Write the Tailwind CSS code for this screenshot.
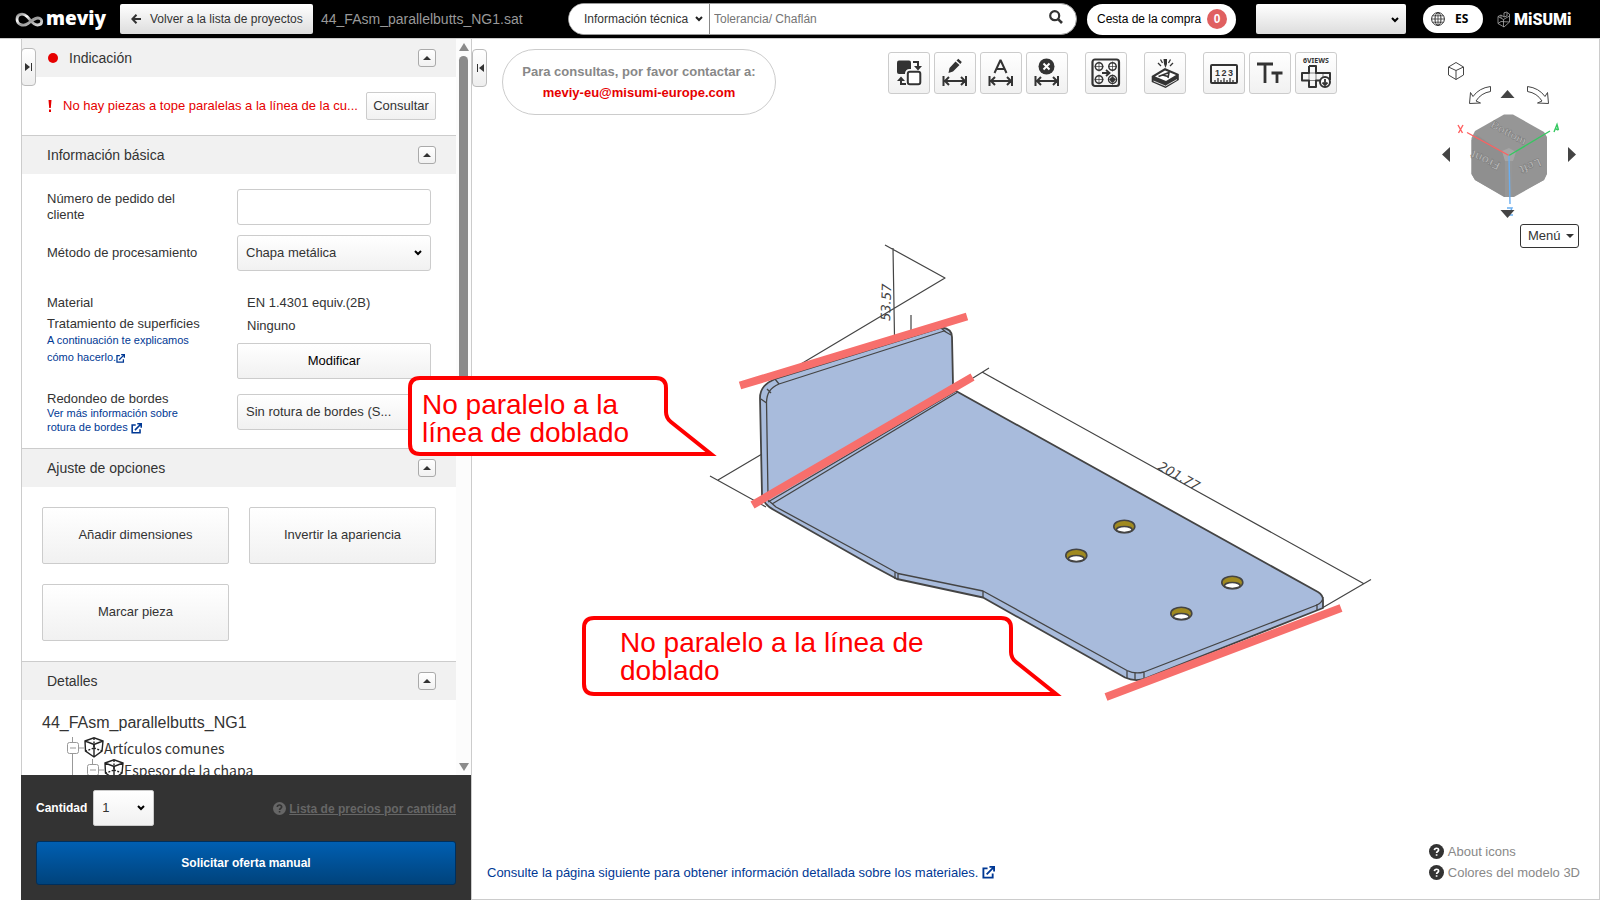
<!DOCTYPE html>
<html lang="es">
<head>
  <meta charset="UTF-8"/>
  <title>meviy</title>
  <meta name="viewport" content="width=device-width,initial-scale=1"/>
  <script src="https://cdn.jsdelivr.net/npm/@tailwindcss/browser@4"></script>
</head>
<body class="h-screen overflow-hidden flex flex-col bg-white text-[#333] text-[13px] leading-4 font-['Liberation_Sans',Arial,sans-serif]">

  <header class="h-[39px] shrink-0 flex items-center bg-black border-b border-[#ccc] pl-[15px] pr-7">
    <div class="w-[553px] shrink-0 flex items-center">
      <a href="#" class="flex items-center gap-[2px] w-[105px]" aria-label="meviy">
        <svg class="w-[29px] h-[17px]" viewBox="0 0 29 17" fill="none">
          <defs>
            <linearGradient id="ring" x1="0" y1="0" x2="1" y2="1">
              <stop offset="0" stop-color="#888"/><stop offset=".3" stop-color="#fff"/><stop offset=".55" stop-color="#999"/><stop offset="1" stop-color="#ddd"/>
            </linearGradient>
          </defs>
          <path d="M13 12.500C8 16 2 13.500 2 8C2 3 8 1.500 12 5.500C16 9.500 18 14 22.500 14C28 14 28 7 23 7C19.500 7 16.500 10 13 12.500Z" stroke="url(#ring)" stroke-width="2.800"/>
        </svg>
        <span class="text-white font-extrabold text-[19px] leading-6 -mt-[2px] font-['Open_Sans',sans-serif]">meviy</span>
      </a>
      <button class="w-[193px] h-[30px] rounded-xs bg-linear-to-b from-white to-[#ddd] flex items-center pl-[11px] text-xs">
        <svg class="w-[10px] h-[10px] mr-[9px]" viewBox="0 0 10 10" fill="none" stroke="#333" stroke-width="2"><path d="M5.500 .7L1.400 5L5.500 9.300M1.500 5H10"/></svg>
        Volver a la lista de proyectos
      </button>
      <span class="ml-2 text-sm text-[#999]">44_FAsm_parallelbutts_NG1.sat</span>
    </div>
    <form class="flex-1 h-8 flex items-center bg-white rounded-full border border-[#999] overflow-hidden">
      <div class="relative h-full">
        <select aria-label="Categoría" class="appearance-none h-full w-[141px] pl-[15px] border-r border-[#888] text-xs bg-white">
          <option>Información técnica</option>
        </select>
        <svg class="absolute right-[7px] top-3 w-2 h-[6px] pointer-events-none" viewBox="0 0 8 6" fill="none" stroke="#222" stroke-width="2"><path d="M1 1L4 4L7 1"/></svg>
      </div>
      <input type="text" aria-label="Buscar" placeholder="Tolerancia/ Chaflán" class="flex-1 h-full pl-1 text-xs outline-none placeholder:text-[#757575]"/>
      <button type="button" aria-label="Buscar" class="mr-[13px] -mt-1">
        <svg class="w-[14px] h-[14px]" viewBox="0 0 14 14" fill="none" stroke="#333" stroke-width="2.200"><circle cx="5.700" cy="5.700" r="4.500"/><path d="M8.800 8.800L13 13" stroke-width="2.600"/></svg>
      </button>
    </form>
    <button class="ml-[10px] w-[149px] h-[31px] rounded-full bg-white text-black text-xs flex items-center pl-[10px] pb-px gap-[6px]">
      Cesta de la compra
      <span class="w-5 h-5 rounded-full bg-[#e06060] text-white font-bold leading-5 text-center">0</span>
    </button>
    <div class="relative ml-5 w-[150px]">
      <select aria-label="Usuario" class="block appearance-none w-full h-[30px] rounded-xs bg-linear-to-b from-white to-[#ddd] text-black px-2"><option></option></select>
      <svg class="absolute right-[7px] top-[13px] w-2 h-[6px] pointer-events-none" viewBox="0 0 8 6" fill="none" stroke="#000" stroke-width="2"><path d="M1 1L4 4L7 1"/></svg>
    </div>
    <button class="ml-[17px] w-[60px] h-7 rounded-full bg-white text-black flex items-center pl-2 gap-[10px] font-bold text-xs font-['Noto_Sans',sans-serif]">
      <svg class="w-[14px] h-[14px]" viewBox="0 0 14 14" fill="none" stroke="#333"><circle cx="7" cy="7" r="6.400"/><ellipse cx="7" cy="7" rx="3" ry="6.400"/><path d="M7 .5V13.500M.5 7H13.500M1.500 3.800H12.500M1.500 10.200H12.500" stroke-width=".8"/></svg>
      ES
    </button>
    <a href="#" class="ml-[14px] w-[75px] flex items-center" aria-label="MiSUMi">
      <svg class="w-[14px] h-[17px] mr-[3px] shrink-0" viewBox="0 0 14 17" fill="none" stroke="#aaa" stroke-width=".8"><path d="M1 5.500L4 4L7 6L10 5V1.500L12.500 3V11L7 16L1 12.500ZM1 5.500L6.500 8.500V16M6.500 8.500L12.500 5M7 6V1.800L10 1M4 4V7M1 12.500L4 10.500L12.500 11"/></svg>
      <span class="text-white font-black text-[16px] leading-5 mt-px font-['Roboto',sans-serif]">MiSUMi</span>
    </a>
  </header>

  <div class="flex-1 min-h-0 flex">
    <aside class="relative w-[451px] ml-[21px] shrink-0 flex flex-col border-r border-[#ccc]">
      <button aria-label="Expandir panel" class="absolute left-0 top-[9px] z-10 w-[15px] h-[38px] border border-[#bbb] rounded-sm bg-linear-to-b from-white to-[#eee] flex items-center justify-center">
        <svg class="w-2 h-2" viewBox="0 0 8 8" fill="#333"><path d="M0 0L5 4L0 8ZM6 0H7V8H6Z"/></svg>
      </button>
      <div class="flex-1 min-h-0 flex border-l border-[#ccc]">
        <div class="flex-1 overflow-hidden">
          <section>
            <h2 class="h-[38px] bg-[#f1f1f1] flex items-center pl-[26px] pr-5 text-sm">
              <span class="w-[10px] h-[10px] rounded-full bg-[#e60000] mr-[11px]"></span>Indicación
              <button aria-label="Contraer" class="ml-auto w-[18px] h-[18px] border border-[#aaa] rounded-[3px] bg-linear-to-b from-white to-[#f1f1f1] flex items-center justify-center"><svg class="w-2 h-1" viewBox="0 0 8 4" fill="#333"><path d="M4 0L8 4H0Z"/></svg></button>
            </h2>
            <div class="h-[58px] flex items-center pl-[26px] pr-5 text-[#e60000]">
              <svg class="w-1 h-3 mr-[11px]" viewBox="0 0 4 12" fill="#e60000"><path d="M.5 0H3.500L2.800 8H1.200ZM1 9.500H3V12H1Z"/></svg>
              <p class="whitespace-nowrap">No hay piezas a tope paralelas a la línea de la cu...</p>
              <button class="ml-auto w-[70px] h-7 border border-[#ccc] rounded-xs bg-linear-to-b from-white to-[#f1f1f1] text-[#333]">Consultar</button>
            </div>
          </section>

          <section class="border-t border-[#ccc]">
            <h2 class="h-[38px] bg-[#f1f1f1] flex items-center pl-[25px] pr-5 text-sm">Información básica
              <button aria-label="Contraer" class="ml-auto w-[18px] h-[18px] border border-[#aaa] rounded-[3px] bg-linear-to-b from-white to-[#f1f1f1] flex items-center justify-center"><svg class="w-2 h-1" viewBox="0 0 8 4" fill="#333"><path d="M4 0L8 4H0Z"/></svg></button>
            </h2>
            <div class="pl-[25px] pr-[25px] pt-[15px] pb-[14px]">
              <div class="flex items-center justify-between">
                <label for="order" class="w-[140px]">Número de pedido del cliente</label>
                <input id="order" type="text" class="w-[194px] h-9 border border-[#ccc] rounded-[3px] px-2"/>
              </div>
              <div class="flex items-center justify-between mt-[10px]">
                <label for="process">Método de procesamiento</label>
                <div class="relative w-[194px]">
                  <select id="process" class="block appearance-none w-full h-9 border border-[#ccc] rounded-[3px] px-2 pb-px bg-linear-to-b from-white to-[#f1f1f1]"><option>Chapa metálica</option></select>
                  <svg class="absolute right-[9px] top-[15px] w-2 h-[6px] pointer-events-none" viewBox="0 0 8 6" fill="none" stroke="#000" stroke-width="2"><path d="M1 1L4 4L7 1"/></svg>
                </div>
              </div>
              <div class="flex justify-between mt-6">
                <div class="w-[170px]">
                  <p>Material</p>
                  <p class="mt-[5px]">Tratamiento de superficies</p>
                  <a href="#" class="block w-[150px] text-[11px] leading-[17px] text-[#003894]">A continuación te explicamos cómo hacerlo.<svg class="inline w-[9px] h-[9px]" viewBox="0 0 14 14" fill="none" stroke="#003894" stroke-width="2"><path d="M6 2.500H1.500V12.500H11.500V8M8 1H13V6M13 1L5 9"/></svg></a>
                </div>
                <div class="w-[194px]">
                  <p class="pl-[10px]">EN 1.4301 equiv.(2B)</p>
                  <p class="pl-[10px] mt-[7px]">Ninguno</p>
                  <button class="mt-[9px] w-full h-9 border border-[#ccc] rounded-xs bg-linear-to-b from-white to-[#f1f1f1] text-black">Modificar</button>
                </div>
              </div>
              <div class="flex justify-between mt-[15px]">
                <div class="w-[170px]">
                  <label for="edges" class="block leading-[15px] -mt-[3px]">Redondeo de bordes</label>
                  <a href="#" class="block w-[150px] text-[11px] leading-[14px] text-[#003894]">Ver más información sobre rotura de bordes <svg class="inline w-[11px] h-[11px]" viewBox="0 0 14 14" fill="none" stroke="#003894" stroke-width="2"><path d="M6 2.500H1.500V12.500H11.500V8M8 1H13V6M13 1L5 9"/></svg></a>
                </div>
                <select id="edges" class="appearance-none w-[194px] h-9 border border-[#ccc] rounded-[3px] px-2 pb-px bg-linear-to-b from-white to-[#f1f1f1]"><option>Sin rotura de bordes (S...</option></select>
              </div>
            </div>
          </section>

          <section class="border-t border-[#ccc]">
            <h2 class="h-[38px] bg-[#f1f1f1] flex items-center pl-[25px] pr-5 text-sm">Ajuste de opciones
              <button aria-label="Contraer" class="ml-auto w-[18px] h-[18px] border border-[#aaa] rounded-[3px] bg-linear-to-b from-white to-[#f1f1f1] flex items-center justify-center"><svg class="w-2 h-1" viewBox="0 0 8 4" fill="#333"><path d="M4 0L8 4H0Z"/></svg></button>
            </h2>
            <div class="grid grid-cols-2 gap-5 px-5 py-5">
              <button class="h-[57px] pb-[2px] border border-[#ccc] rounded-xs bg-linear-to-b from-white to-[#f1f1f1]">Añadir dimensiones</button>
              <button class="h-[57px] pb-[2px] border border-[#ccc] rounded-xs bg-linear-to-b from-white to-[#f1f1f1]">Invertir la apariencia</button>
              <button class="h-[57px] pb-[2px] border border-[#ccc] rounded-xs bg-linear-to-b from-white to-[#f1f1f1]">Marcar pieza</button>
            </div>
          </section>

          <section class="border-t border-[#ccc]">
            <h2 class="h-[38px] bg-[#f1f1f1] flex items-center pl-[25px] pr-5 text-sm">Detalles
              <button aria-label="Contraer" class="ml-auto w-[18px] h-[18px] border border-[#aaa] rounded-[3px] bg-linear-to-b from-white to-[#f1f1f1] flex items-center justify-center"><svg class="w-2 h-1" viewBox="0 0 8 4" fill="#333"><path d="M4 0L8 4H0Z"/></svg></button>
            </h2>
            <p class="pl-5 pt-[13px] text-base leading-5">44_FAsm_parallelbutts_NG1</p>
            <ul class="pl-[45px] pt-1 text-sm font-['Noto_Sans_CJK_JP',sans-serif]">
              <li class="flex items-center h-[22px]">
                <svg class="w-[37px] h-[22px]" viewBox="0 0 37 22" fill="none" stroke="#999"><rect x=".5" y="5.500" width="11" height="11" rx="2"/><path d="M3 11H9M12 11H17M5.500 0V5M5.500 17V22"/><g stroke="#222" stroke-width="1.400"><path d="M18 4L27 .8L36 4L35 14L27 20L18.500 14ZM18 4L27 7.500L36 4M27 7.500V20"/><path d="M27 1V11L19 14M27 11L35 14" stroke-dasharray="2 1.500"/></g></svg>
                Artículos comunes
              </li>
              <li class="flex items-center h-[22px]">
                <svg class="w-[57px] h-[22px]" viewBox="0 0 57 22" fill="none" stroke="#999"><path d="M5.500 0V22"/><rect x="20.500" y="5.500" width="11" height="11" rx="2"/><path d="M23 11H29M32 11H37M25.500 0V5M25.500 17V22"/><g stroke="#222" stroke-width="1.400"><path d="M38 4L47 .8L56 4L55 14L47 20L38.500 14ZM38 4L47 7.500L56 4M47 7.500V20"/><path d="M47 1V11L39 14M47 11L55 14" stroke-dasharray="2 1.500"/></g></svg>
                Espesor de la chapa
              </li>
            </ul>
          </section>
        </div>
        <div class="w-[15px] flex flex-col items-center bg-[#fcfcfc] py-1">
          <svg class="w-[10px] h-2" viewBox="0 0 10 8" fill="#8b8b8b"><path d="M5 0L10 8H0Z"/></svg>
          <div class="w-[9px] h-[54%] mt-[5px] rounded-full bg-[#8b8b8b]"></div>
          <svg class="w-[10px] h-2 mt-auto" viewBox="0 0 10 8" fill="#8b8b8b"><path d="M0 0H10L5 8Z"/></svg>
        </div>
      </div>
      <div class="h-[125px] shrink-0 bg-[#333] px-[15px] pt-[15px]">
        <div class="flex items-center text-xs">
          <label for="qty" class="text-white font-bold mr-[6px]">Cantidad</label>
          <div class="relative w-[61px]">
            <select id="qty" class="block appearance-none w-full h-9 rounded-xs border border-[#ccc] px-2 bg-linear-to-b from-white to-[#f1f1f1] text-[#333] text-[13px]"><option>1</option></select>
            <svg class="absolute right-[9px] top-[15px] w-2 h-[6px] pointer-events-none" viewBox="0 0 8 6" fill="none" stroke="#000" stroke-width="2"><path d="M1 1L4 4L7 1"/></svg>
          </div>
          <a href="#" class="ml-auto flex items-center gap-[3px] text-[#666] font-bold">
            <svg class="w-[13px] h-[13px]" viewBox="0 0 16 16"><circle cx="8" cy="8" r="8" fill="#666"/><path d="M5.300 6.200C5.500 2.800 10.800 2.900 10.700 6.200C10.600 8 8.100 8 8.100 9.800M8.100 11V13" fill="none" stroke="#333" stroke-width="2"/></svg>
            <span class="underline mt-px">Lista de precios por cantidad</span>
          </a>
        </div>
        <button class="w-full h-[44px] mt-[15px] border border-[#002f5c] rounded-[3px] bg-linear-to-b from-[#005fb2] to-[#00437c] text-white text-xs font-bold">Solicitar oferta manual</button>
      </div>
    </aside>

    <main class="relative flex-1 min-w-0 overflow-hidden border-r border-b border-[#ccc] flex flex-col">
      <!-- bent plate with its dimensions -->
      <svg class="absolute left-0 top-0 w-[1127px] h-[860px]" viewBox="472 39 1127 860" fill="none" stroke="#444" stroke-width="1.200" stroke-linejoin="round">
        <path d="M885 245L945 278L800 364.500M893 248L894.500 336M911 315V331"/>
        <path d="M973 378L989 368M982 372L1363.500 583.500M1323 607.500L1371 579.500M710 476L766 507M718 480L762 454"/>
        <g font-size="13" font-style="italic" font-weight="200" font-family="DejaVu Sans,sans-serif" fill="#444" stroke="none">
          <text transform="translate(890 321) rotate(-88)">53.57</text>
          <text transform="translate(1157 469) rotate(29)">201.77</text>
        </g>
        <path fill="#a8bbdc" stroke-width="1.800" d="M760 398C760 388 766 383 775 379L942 327.500Q952 329 952 337L953 384L956 391L1318 592Q1323 595 1323 600V608L1145 678.500Q1135 682 1125 677.500L983 597.500L897 579L870 564.500L774 510Q763 504 762 495Z"/>
        <path stroke-width="1.300" d="M766.500 402C767 393 770 388 779 384L944 331L951 335M766.500 402L768 496M775 379L779 384M767 389L771 393M761 399L766.500 403M941 328L946 332"/>
        <path stroke-width="1.300" d="M768 502L956 391M772 504L957 392.500M768 500L776 507L870 558L898 573.500L983 591L1127 670.500Q1135 674.500 1144 672L1317 605Q1323 602 1323 597M895 572V579M898 573.500V579.500M983 591V597.500M1127 670.500V678M1135 673V680M1144 672V678.500M1317 604V610"/>
        <g stroke-width="1.600">
          <g fill="#a08a20"><ellipse cx="1124.300" cy="526.500" rx="10.500" ry="6.300"/><ellipse cx="1076.300" cy="555.500" rx="10.500" ry="6.300"/><ellipse cx="1232.300" cy="582.500" rx="10.500" ry="6.300"/><ellipse cx="1181.300" cy="613.500" rx="10.500" ry="6.300"/></g>
          <g fill="#fff"><ellipse cx="1124.300" cy="529.500" rx="7.800" ry="3"/><ellipse cx="1076.300" cy="558.500" rx="7.800" ry="3"/><ellipse cx="1232.300" cy="585.500" rx="7.800" ry="3"/><ellipse cx="1181.300" cy="616.500" rx="7.800" ry="3"/></g>
        </g>
        <path stroke="#f76f6c" stroke-width="8" d="M740 385.500L967 316.500M752.500 505L972.500 377M1106 697L1341 608"/>
      </svg>

      <button aria-label="Contraer panel" class="absolute left-0 top-[10px] w-[15px] h-[38px] border border-[#bbb] rounded-sm bg-linear-to-b from-white to-[#eee] flex items-center justify-center">
        <svg class="w-2 h-2" viewBox="0 0 8 8" fill="#333"><path d="M1 0H2V8H1ZM8 0L3 4L8 8Z"/></svg>
      </button>

      <div class="relative flex items-start pl-[30px] pt-[10px]">
        <div class="w-[274px] h-[66px] border border-[#ccc] rounded-full text-center font-bold text-[#888] pt-[11px] leading-[21px]">
          Para consultas, por favor contactar a:<br/>
          <a href="mailto:meviy-eu@misumi-europe.com" class="text-[#e60000]">meviy-eu@misumi-europe.com</a>
        </div>
        <div class="flex gap-[17px] ml-[112px] mt-[3px]">
          <div class="flex gap-1">
            <button aria-label="Invertir cara" class="w-[42px] h-[42px] border border-[#ccc] rounded-[3px] bg-linear-to-b from-white to-[#f1f1f1]">
              <svg viewBox="1 1 40 40" fill="none" stroke="#333" stroke-width="2"><rect x="9" y="8.500" width="14" height="13.500" rx="2" fill="#333" stroke="none"/><rect x="19.500" y="19.500" width="12.500" height="12.500" rx="2" fill="#f8f8f8" stroke="#f8f8f8" stroke-width="5"/><rect x="19.800" y="19.800" width="12.500" height="12.500" rx="2" fill="#fff"/><path d="M25 10H30V15M18 32H13V27" /><path d="M26 14H34L30 18.500ZM9 29H17L13 24.500Z" fill="#333" stroke="none"/></svg>
            </button>
            <button aria-label="Editar cota" class="w-[42px] h-[42px] border border-[#ccc] rounded-[3px] bg-linear-to-b from-white to-[#f1f1f1]">
              <svg viewBox="1 1 40 40" fill="none" stroke="#333" stroke-width="2"><path d="M14.500 21L15.500 16L21.500 9.500L25.500 13L19 19.500ZM22.500 8.500L24.300 6.800L27.800 10L26.300 12Z" fill="#333" stroke="none"/><path d="M9.500 24V34M32 24V34M11 29H31M15 25L11 29L15 33M27 25L31 29L27 33"/></svg>
            </button>
            <button aria-label="Texto de cota" class="w-[42px] h-[42px] border border-[#ccc] rounded-[3px] bg-linear-to-b from-white to-[#f1f1f1]">
              <svg viewBox="1 1 40 40" fill="none" stroke="#333" stroke-width="2"><path d="M14.500 21L20.500 8L26.500 21M16.500 17H24.500" stroke-linejoin="bevel"/><path d="M9.500 24V34M32 24V34M11 29H31M15 25L11 29L15 33M27 25L31 29L27 33"/></svg>
            </button>
            <button aria-label="Eliminar cota" class="w-[42px] h-[42px] border border-[#ccc] rounded-[3px] bg-linear-to-b from-white to-[#f1f1f1]">
              <svg viewBox="1 1 40 40" fill="none" stroke="#333" stroke-width="2"><circle cx="20.500" cy="14.500" r="8" fill="#333" stroke="none"/><path d="M17.500 11.500L23.500 17.500M23.500 11.500L17.500 17.500" stroke="#fff"/><path d="M9.500 24V34M32 24V34M11 29H31M15 25L11 29L15 33M27 25L31 29L27 33"/></svg>
            </button>
          </div>
          <button aria-label="Cambiar agujeros" class="w-[42px] h-[42px] border border-[#ccc] rounded-[3px] bg-linear-to-b from-white to-[#f1f1f1]">
            <svg viewBox="1 1 40 40" fill="none" stroke="#333" stroke-width="1.500"><rect x="7.500" y="7.500" width="26.500" height="26.500" rx="2.500" stroke-width="2.200"/><circle cx="14" cy="14.500" r="3.700"/><circle cx="27.500" cy="14.500" r="3.700"/><circle cx="14" cy="27.500" r="3.700"/><circle cx="27.500" cy="27.500" r="4"/><circle cx="27.500" cy="27.500" r="1.800" fill="#333"/><path d="M14 9.500V19.500M9.500 14.500H18.500M27.500 9.500V19.500M23 14.500H32M14 22.500V32.500M9.500 27.500H18.500M27.500 22.500V32.500M23 27.500H32" stroke-width=".7"/><path d="M17 21H24M21 18L24.500 21L21 24" stroke-width="1.800"/></svg>
          </button>
          <button aria-label="Grabado" class="w-[42px] h-[42px] border border-[#ccc] rounded-[3px] bg-linear-to-b from-white to-[#f1f1f1]">
            <svg viewBox="1 1 40 40" fill="none" stroke="#333" stroke-width="1.600"><path d="M8.500 24.500L21 17L34 22.500V27.500L21.500 35L8.500 29.500Z" fill="#333"/><path d="M11 24.500L21 18.500L32 23L22 29Z" fill="#fff" stroke="none"/><path d="M9.500 29L21.500 34L33 27.500" stroke="#fff" stroke-width=".8"/><path d="M14.500 24.500L25 20.500L24 26M18.500 23L24 24.500" stroke-width="1.600"/><path d="M19.500 7H23V12L21.500 16L20 12Z" fill="#333" stroke="none"/><path d="M14 11L17 14M16.500 7.500L18.500 11M29 11L26 14M26.500 7.500L24.500 11" stroke-width="1.300"/></svg>
          </button>
          <div class="flex gap-1">
            <button aria-label="Medir" class="w-[42px] h-[42px] border border-[#ccc] rounded-[3px] bg-linear-to-b from-white to-[#f1f1f1]">
              <svg viewBox="1 1 40 40" fill="none" stroke="#333" stroke-width="2"><rect x="8" y="13" width="26" height="18" rx="1"/><path d="M12 30V28M15 30V26M18 30V28M21 30V26M24 30V28M27 30V26M30 30V28" stroke-width="1.300"/><g font-size="9" font-weight="bold" font-family="Liberation Sans,sans-serif" fill="#333" stroke="none"><text x="12" y="24">1</text><text x="18.500" y="24">2</text><text x="25" y="24">3</text></g></svg>
            </button>
            <button aria-label="Tamaño de texto" class="w-[42px] h-[42px] border border-[#ccc] rounded-[3px] bg-linear-to-b from-white to-[#f1f1f1]">
              <svg viewBox="1 1 40 40" fill="none" stroke="#333" stroke-width="2.800"><path d="M8 12H24M16 12V31M22.500 21H33.500M28 21V31"/></svg>
            </button>
            <button aria-label="6 vistas" class="w-[42px] h-[42px] border border-[#ccc] rounded-[3px] bg-linear-to-b from-white to-[#f1f1f1]">
              <svg viewBox="1 1 40 40" fill="none" stroke="#333" stroke-width="2" stroke-linejoin="round"><text x="8" y="11" font-size="7" font-weight="bold" font-family="Noto Sans,sans-serif" fill="#333" stroke="none">6VIEWS</text><path d="M14 14H21V21H35V28M14 14V21H7V28.500H14V35H21V28.500H25"/><path d="M14 21H21V28.500H14ZM28 21V25" stroke-width=".6"/><circle cx="30" cy="30" r="5" fill="#fff"/><path d="M30 27V32.500M27.500 30.500L30 33L32.500 30.500" stroke-width="1.800"/></svg>
            </button>
          </div>
        </div>
      </div>

      <!-- view cube -->
      <div class="absolute right-0 top-[11px] w-[199px]">
        <svg class="w-[199px] h-[174px]" viewBox="0 0 199 174" fill="none" stroke="#444">
          <path d="M48.500 17L56 12.500L63.500 17V25L56 29.500L48.500 25ZM48.500 17L56 20.500L63.500 17M56 20.500V29.500"/>
          <path d="M90.500 36.500V41.500Q81 43 76 51L80.500 53L69.500 53.500L70.500 42.500L73 46.500Q79 38 90.500 36.500ZM127.500 36.500V41.500Q137 43 142 51L137.500 53L148.500 53.500L147.500 42.500L145 46.500Q139 38 127.500 36.500Z"/>
          <path stroke="none" fill="#444" d="M107.500 40L114.500 48H100.500ZM42 104.500L50 97V112ZM176 104.500L168 97V112Z"/>
          <g stroke="none">
            <path fill="#969696" d="M104 64.500H113L144 82L147 87V123L144 130L114 147H104L75 130L71.500 124V88L75 81Z"/>
            <path fill="#8f8f8f" d="M71.500 90L77 85L102 102L105 109V147L75 130L71.500 124Z"/>
            <path fill="#949494" d="M147 90L142 86L116 102L112 109V147L144 130L147 124Z"/>
            <path fill="#a5a5a5" d="M102 101L109 98L116 102L113 111H105Z"/>
          </g>
          <g fill="#bbb" stroke="#777" stroke-width=".5" font-size="12" font-weight="bold" font-family="Liberation Sans,sans-serif">
            <text font-size="11" transform="translate(90 77) rotate(28)">Bottom</text>
            <text transform="translate(101 113) rotate(205)">Front</text>
            <text transform="translate(139 108) rotate(157)">Left</text>
          </g>
          <path stroke="#ff6060" stroke-width="1.400" d="M109 105.500L67 82.500M58 75L62.500 83M63 75L58.500 83"/>
          <path stroke="#35c860" stroke-width="1.400" d="M109 105.500L150 81M154 82L157 74.500L158.500 80M156 79L158.500 80"/>
          <path stroke="#6aaef0" stroke-width="1.400" d="M109 105.500L110 154M107 158H112L109 165H113"/>
          <path stroke="none" fill="#444" d="M100.500 160H114.500L107.500 168Z"/>
        </svg>
        <button class="block ml-auto mr-5 w-[59px] h-6 border border-[#333] rounded-[3px] bg-white">
          <span class="flex items-center justify-between pl-[7px] pr-1">Menú<svg class="w-2 h-1" viewBox="0 0 8 4" fill="#333"><path d="M0 0H8L4 4Z"/></svg></span>
        </button>
      </div>

      <div class="relative mt-auto flex items-end justify-between pl-[15px] pr-[19px] pb-[16px] leading-[21px]">
        <a href="#" class="flex items-center gap-1 text-[#003894]">Consulte la página siguiente para obtener información detallada sobre los materiales.
          <svg class="w-[13px] h-[13px]" viewBox="0 0 14 14" fill="none" stroke="#003894" stroke-width="2"><path d="M6 2.500H1.500V12.500H11.500V8M8 1H13V6M13 1L5 9"/></svg>
        </a>
        <div class="text-[#888]">
          <a href="#" class="flex items-center gap-1"><svg class="w-[15px] h-[15px]" viewBox="0 0 16 16"><circle cx="8" cy="8" r="8" fill="#333"/><path d="M5.800 6.500C6 3.800 10.300 3.900 10.200 6.500C10.100 8 8.100 8 8.100 9.500M8.100 10.800V12.500" fill="none" stroke="#fff" stroke-width="1.800"/></svg>About icons</a>
          <a href="#" class="flex items-center gap-1"><svg class="w-[15px] h-[15px]" viewBox="0 0 16 16"><circle cx="8" cy="8" r="8" fill="#333"/><path d="M5.800 6.500C6 3.800 10.300 3.900 10.200 6.500C10.100 8 8.100 8 8.100 9.500M8.100 10.800V12.500" fill="none" stroke="#fff" stroke-width="1.800"/></svg>Colores del modelo 3D</a>
        </div>
      </div>
    </main>
  </div>

  <!-- callouts -->
  <div class="absolute left-[408px] top-[376px] w-[312px] h-20 z-20">
    <svg class="absolute inset-0 w-full h-full" viewBox="0 0 312 80" fill="#fff" stroke="#f00" stroke-width="4"><path d="M12 2H248Q258 2 258 12V36Q258 42 263 46L303 78H12Q2 78 2 68V12Q2 2 12 2Z"/></svg>
    <p class="relative pl-[14px] pt-[15px] text-[28px] leading-7 text-[#f00]">No paralelo a la<br/>línea de doblado</p>
  </div>
  <div class="absolute left-[582px] top-[616px] w-[484px] h-20 z-20">
    <svg class="absolute inset-0 w-full h-full" viewBox="0 0 484 80" fill="#fff" stroke="#f00" stroke-width="4"><path d="M12 2H419Q429 2 429 12V36Q429 42 434 46L474 78H12Q2 78 2 68V12Q2 2 12 2Z"/></svg>
    <p class="relative pl-[38px] pt-[13px] text-[28px] leading-7 text-[#f00]">No paralelo a la línea de<br/>doblado</p>
  </div>
</body>
</html>
